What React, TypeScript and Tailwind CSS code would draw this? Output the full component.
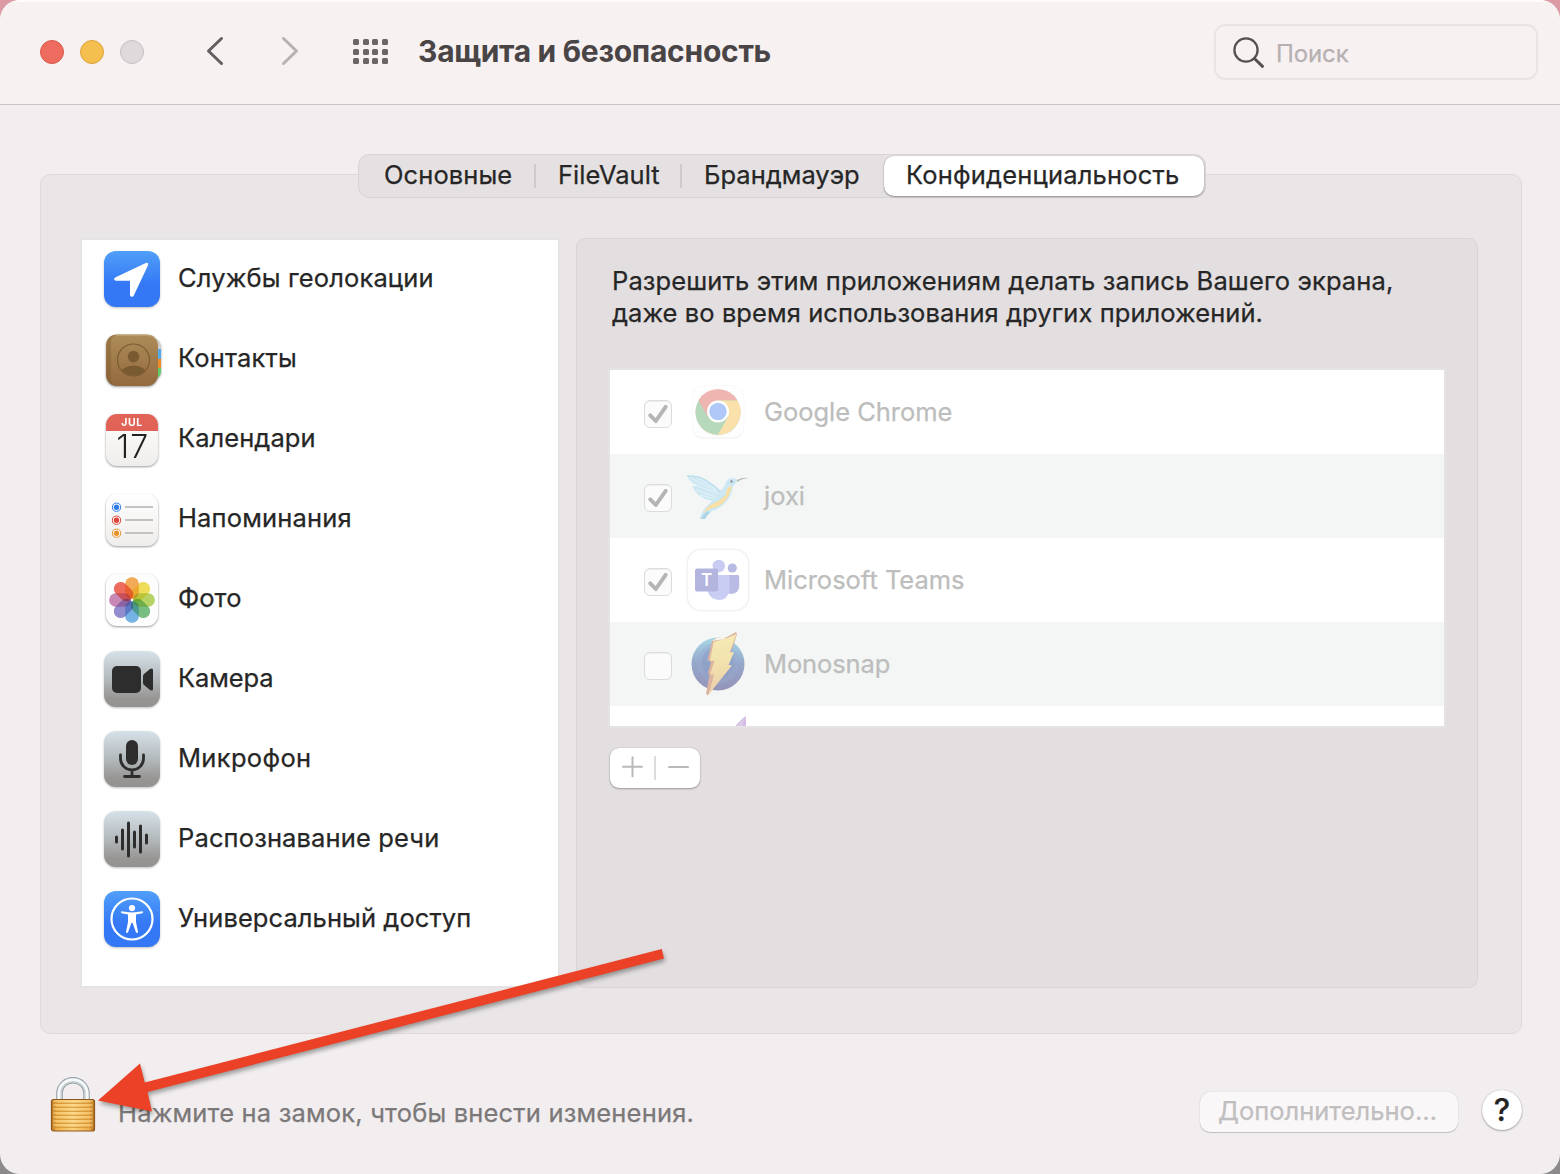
import React from "react";

const Label = ({ className = "", children }: { className?: string; children: React.ReactNode }) => (
  <span className={"whitespace-nowrap " + className}>{children}</span>
);

const Tile = ({ fill, children }: { fill: string; children: React.ReactNode }) => (
  <svg viewBox="0 0 56 56" className="size-14 shrink-0 overflow-visible drop-shadow-[0_1px_1px_rgba(0,0,0,0.25)]">
    <defs>
      <linearGradient id="tileBlue" x1="0" y1="0" x2="0" y2="1">
        <stop offset="0" stopColor="#509ff8" />
        <stop offset="0.6" stopColor="#3478f6" />
        <stop offset="1" stopColor="#3478f6" />
      </linearGradient>
      <linearGradient id="tileGray" x1="0" y1="0" x2="0" y2="1">
        <stop offset="0" stopColor="#d6e1e8" />
        <stop offset="0.5" stopColor="#b3b9bb" />
        <stop offset="0.85" stopColor="#979594" />
        <stop offset="1" stopColor="#949291" />
      </linearGradient>
    </defs>
    <rect width="56" height="56" rx="12" fill={fill} />
    {children}
  </svg>
);

const PaperTile = ({ children }: { children: React.ReactNode }) => (
  <svg viewBox="0 0 56 56" className="size-14 shrink-0 overflow-visible drop-shadow-[0_1px_1px_rgba(0,0,0,0.4)]">
    <defs>
      <linearGradient id="paper" x1="0" y1="0" x2="0" y2="1">
        <stop offset="0" stopColor="#ffffff" />
        <stop offset="1" stopColor="#efedeb" />
      </linearGradient>
      <linearGradient id="leather" x1="0" y1="0" x2="0" y2="1">
        <stop offset="0" stopColor="#ad8c57" />
        <stop offset="1" stopColor="#94693f" />
      </linearGradient>
    </defs>
    {children}
  </svg>
);

const LocationIcon = () => (
  <Tile fill="url(#tileBlue)">
    <path
      d="M11.6 26.2 L41.3 12.2 Q45.2 10.8 43.8 14.8 L29.8 44.6 Q28.4 46.9 26.3 45 L26 44.2 V29.8 H11.8 Q8.4 28.4 11.6 26.2Z"
      fill="#fff"
    />
  </Tile>
);

const ContactsIcon = () => (
  <PaperTile>
    <path d="M46 7 h5 q6 3 6 10 v1 h-11z" fill="#d0cfcc" />
    <path d="M50 18 h7 v10 h-7z" fill="#53aae6" />
    <path d="M50 28 h7 v9 h-7z" fill="#ef8b27" />
    <path d="M50 37 h7 v4 q-1 6 -7 7z" fill="#62ca66" />
    <rect x="2" y="3.5" width="52" height="51.5" rx="11" fill="url(#leather)" />
    <path d="M12 3.7 H13 q-5 1 -6 6 v39 q1 5 5 6 q-9.600 -1 -9.600 -10.500 v-30 q0 -9.800 9.600 -10.500z" fill="#79562c" opacity=".35" />
    <path d="M12 4.2 H43 q6 0 9 4" fill="none" stroke="#cbb58a" strokeWidth="1" opacity=".7" />
    <clipPath id="contactClip">
      <circle cx="29.500" cy="29" r="15.500" />
    </clipPath>
    <g fill="#795b32">
      <circle cx="29.500" cy="25.600" r="5.800" />
      <ellipse cx="29.500" cy="43.500" rx="13.500" ry="9" clipPath="url(#contactClip)" />
    </g>
    <circle cx="29.500" cy="29" r="16" fill="none" stroke="#795b32" strokeWidth="1.200" />
  </PaperTile>
);

const CalendarIcon = () => (
  <PaperTile>
    <rect x="2" y="3" width="52" height="52" rx="11" fill="url(#paper)" />
    <path d="M2 20 V14 a11 11 0 0 1 11 -11 H43 a11 11 0 0 1 11 11 V20z" fill="#e16256" />
    <text x="28" y="15" textAnchor="middle" fontSize="10.500" fontWeight="700" letterSpacing=".6" fill="#fff" className="font-['Inter',sans-serif] [-webkit-text-stroke:0px]">
      JUL
    </text>
    <text x="29" y="46.500" textAnchor="middle" fontSize="32" fontWeight="300" letterSpacing="1.2" fill="#222" className="font-['Inter',sans-serif] [-webkit-text-stroke:0px]">
      17
    </text>
  </PaperTile>
);

const RemindersIcon = () => (
  <PaperTile>
    <rect x="2" y="3" width="52" height="52" rx="11" fill="url(#paper)" />
    {[
      { y: 16.2, c: "#2f7de8" },
      { y: 29.2, c: "#dd4338" },
      { y: 42.2, c: "#e8932b" },
    ].map((r) => (
      <g key={r.y}>
        <circle cx="12.500" cy={r.y} r="4.100" fill="#fff" stroke={r.c} strokeWidth="1" />
        <circle cx="12.500" cy={r.y} r="2.700" fill={r.c} />
        <path d={`M21 ${r.y - 0.2} H49`} stroke="#bdbdbd" strokeWidth="1.800" />
      </g>
    ))}
  </PaperTile>
);

const petals = ["#f19a37", "#ecd63c", "#a9cc48", "#5fb36c", "#5aa5e0", "#7f78c4", "#bd72a8", "#e9503f"];
const PhotosIcon = () => (
  <PaperTile>
    <rect x="2" y="3" width="52" height="52" rx="11" fill="#fdfdfd" />
    {petals.map((c, i) => (
      <rect key={c} x="21.200" y="6.200" width="13.600" height="21.800" rx="6.800" fill={c} opacity="0.6" transform={`rotate(${i * 45} 28 29)`} />
    ))}
    <g className="isolate">
      {petals.map((c, i) => (
        <rect
          key={c}
          x="21.200"
          y="6.200"
          width="13.600"
          height="21.800"
          rx="6.800"
          fill={c}
          opacity="0.6"
          transform={`rotate(${i * 45} 28 29)`}
          className="mix-blend-multiply"
        />
      ))}
    </g>
    <circle cx="28" cy="29" r="1.200" fill="#fff" />
  </PaperTile>
);

const CameraIcon = () => (
  <Tile fill="url(#tileGray)">
    <rect x="8" y="15" width="29" height="27" rx="5" fill="#2d2d2d" />
    <path d="M39 25 Q39 24 40 23 L46 18 Q49 16.500 49 19 V38 Q49 40.500 46 39 L40 34 Q39 33 39 32Z" fill="#2d2d2d" />
  </Tile>
);

const MicIcon = () => (
  <Tile fill="url(#tileGray)">
    <rect x="22" y="9" width="12" height="25" rx="6" fill="#2d2d2d" />
    <path d="M16.500 24 V27.500 A11.500 11.500 0 0 0 39.500 27.500 V24 M28 39 V45 M20.500 45.500 H35.500" fill="none" stroke="#2d2d2d" strokeWidth="2.800" strokeLinecap="round" />
  </Tile>
);

const SpeechIcon = () => (
  <Tile fill="url(#tileGray)">
    <path
      d="M12.500 26 V31 M18.500 19 V38 M24.500 12 V45 M30.500 21 V36 M36.500 15 V41 M42.500 24 V32"
      fill="none"
      stroke="#2d2d2d"
      strokeWidth="3"
      strokeLinecap="round"
    />
  </Tile>
);

const AccessIcon = () => (
  <Tile fill="url(#tileBlue)">
    <circle cx="28" cy="28" r="20.500" fill="none" stroke="#fff" strokeWidth="2.200" />
    <circle cx="28" cy="17" r="3.100" fill="#fff" />
    <path
      d="M17.500 20.300 Q28 22.500 38.500 20.300 Q39.800 21.200 38.500 22.200 L32 23.600 V31 L34 41 Q33.600 42.700 32 41.600 L28.600 32 H27.400 L24 41.600 Q22.400 42.700 22 41 L24 31 V23.600 L17.500 22.200 Q16.200 21.200 17.500 20.300Z"
      fill="#fff"
    />
  </Tile>
);

const services = [
  { name: "Службы геолокации", Icon: LocationIcon, t: "tracking-[0.14px]" },
  { name: "Контакты", Icon: ContactsIcon, t: "tracking-[0.17px]" },
  { name: "Календари", Icon: CalendarIcon, t: "tracking-[0.05px]" },
  { name: "Напоминания", Icon: RemindersIcon, t: "tracking-[0.16px]" },
  { name: "Фото", Icon: PhotosIcon, t: "tracking-[0.1px]" },
  { name: "Камера", Icon: CameraIcon, t: "tracking-[-0.1px]" },
  { name: "Микрофон", Icon: MicIcon, t: "tracking-[0.33px]" },
  { name: "Распознавание речи", Icon: SpeechIcon, t: "tracking-[0.14px]" },
  { name: "Универсальный доступ", Icon: AccessIcon, t: "tracking-[0.08px]" },
];

const ChromeIcon = () => (
  <svg viewBox="0 0 64 64" className="size-16 shrink-0">
    <rect x="6" y="6.500" width="52" height="52" rx="11" fill="#ededed" />
    <rect x="6" y="5.500" width="52" height="52" rx="11" fill="#fefefe" stroke="#f7f7f7" strokeWidth="0.800" />
    <circle cx="32" cy="32.800" r="22.500" fill="#e3dccb" />
    <circle cx="32" cy="32" r="22.500" fill="#b6d8bb" />
    <path d="M12.500 20.500 A22.500 22.500 0 0 1 51.500 20.500 H32 L22.500 37.500Z" fill="#efb5b0" />
    <path d="M51.500 20.500 A22.500 22.500 0 0 1 32 54.500 L42 37 L32 20.500Z" fill="#fae1ab" />
    <circle cx="32" cy="31.500" r="11" fill="#fff" />
    <circle cx="32" cy="31.500" r="8.700" fill="#b0c8f7" />
  </svg>
);

const JoxiIcon = () => (
  <svg viewBox="0 0 64 64" className="size-16 shrink-0">
    <path d="M1 12 Q12 11 23 18 Q31 23 34 27 Q38 24 40 18 Q42 14 47 14 Q50 14 52 16.500 Q50 19 47 22 Q46 32 39 39 Q32 46 26 47 Q23 50 19 55 L14 55 Q15 48 21 42 Q25 38 26 37 Q11 34 6 22 Q9 22 11 22 Q4 18 1 12Z" fill="#cde8f3" />
    <path d="M3 13 L32 28 M8 20 L32 30 M10 26 L30 33 M14 31 L29 35 M11 13 L31 26" stroke="#e6f3f7" strokeWidth="0.900" fill="none" />
    <path d="M1 12 Q14 11 24 19 Q31 24 34 28" stroke="#b8deee" strokeWidth="1.400" fill="none" />
    <path d="M44 22 Q40 25 40 30 Q36 36 28 39 Q20 43 18 49 Q24 44 31 43 Q42 38 46 23Z" fill="#f8dfa5" />
    <path d="M15 55 Q17 50 21 47 L24 48 Q21 51 19 55Z" fill="#acd4e8" />
    <path d="M51 16 Q57 13 63 14 Q56 14.500 51 18Z" fill="#b3bab8" />
    <circle cx="45.500" cy="17.500" r="1.300" fill="#8e9899" />
  </svg>
);

const TeamsIcon = () => (
  <svg viewBox="0 0 64 64" className="size-16 shrink-0">
    <rect x="1.300" y="1.300" width="61.400" height="61.400" rx="14" fill="#fff" stroke="#f2f2f2" strokeWidth="1.600" />
    <circle cx="32.800" cy="18" r="6.200" fill="#c9cbf2" />
    <circle cx="46.300" cy="20" r="4.600" fill="#b7bae2" />
    <path d="M41 27 H52 Q53.200 27 53.200 28.500 V39 Q52 46 45 46 Q42 46 41 44Z" fill="#b9bbe4" />
    <path d="M27 27 H42 Q43.500 27 43.500 28.500 V42 Q42 52 32.500 52 Q23 51 21.500 42Z" fill="#cacdf3" />
    <rect x="9" y="20.500" width="23" height="23" rx="2" fill="#b3b5de" />
    <text x="20.500" y="38" textAnchor="middle" fontSize="17" fontWeight="600" fill="#fff" className="font-['Inter',sans-serif]">
      T
    </text>
  </svg>
);

const MonosnapIcon = () => (
  <svg viewBox="0 0 64 64" className="size-16 shrink-0">
    <defs>
      <linearGradient id="mono" x1="0" y1="0" x2="0" y2="1">
        <stop offset="0" stopColor="#a8d8e8" />
        <stop offset="0.5" stopColor="#94a6c9" />
        <stop offset="1" stopColor="#9493b8" />
      </linearGradient>
      <linearGradient id="bolt" x1="0" y1="0" x2="0" y2="1">
        <stop offset="0" stopColor="#f5eab5" />
        <stop offset="0.45" stopColor="#f2e2ae" />
        <stop offset="1" stopColor="#ebcda7" />
      </linearGradient>
    </defs>
    <circle cx="32" cy="32" r="26.500" fill="url(#mono)" />
    <circle cx="32" cy="31" r="21" fill="#98abd0" opacity=".4" />
    <circle cx="32" cy="30" r="16" fill="#8a9bc4" opacity=".5" />
    <path d="M26 9 L30 6 L41 5 L50 0 L51 2 L48 12 L40 30 L29 46 L22 63.500 L20 62 L23.500 43 L22 41 L25 30 L21.500 28Z" fill="#dcb3a1" />
    <path d="M27.500 10 L41 6 L50.500 2 L43.500 20.500 L48 20 L42.500 33 L46 33.500 L35 47 L22.500 63 L28 42.500 L24 42.500 L28.500 28.500 L24 29Z" fill="url(#bolt)" />
    <path d="M26 9 L31 6 L41 4 L38 7Z" fill="#f8f6ef" />
  </svg>
);

const PurpleIcon = () => (
  <svg viewBox="0 0 64 64" className="size-16 shrink-0">
    <path d="M46 20 Q49 14 59.500 5 Q61 14 58 22Z" fill="#d3b9e6" />
    <path d="M44 20 Q50 17 59 6 L55 20Z" fill="#dbcbe9" />
  </svg>
);

const apps = [
  { name: "Google Chrome", Icon: ChromeIcon, checked: true, bg: "bg-white", t: "tracking-[-0.04px]" },
  { name: "joxi", Icon: JoxiIcon, checked: true, bg: "bg-[#f4f6f5]", t: "tracking-[0px]" },
  { name: "Microsoft Teams", Icon: TeamsIcon, checked: true, bg: "bg-white", t: "tracking-[-0.02px]" },
  { name: "Monosnap", Icon: MonosnapIcon, checked: false, bg: "bg-[#f4f6f5]", t: "tracking-[-0.12px]" },
];

const Checkbox = ({ checked }: { checked: boolean }) => (
  <span className="mt-1 flex size-7 shrink-0 rounded-md border border-[#dcdcdc] bg-[#fbfbfb] shadow-[inset_0_1px_1px_rgba(0,0,0,0.06)]">
    {checked && (
      <svg viewBox="0 0 28 28" className="-m-px size-7 shrink-0">
        <path d="M6.200 15.300 L11.800 21 L21.700 6.800" fill="none" stroke="#b4b4b4" strokeWidth="3.900" strokeLinecap="round" strokeLinejoin="round" />
      </svg>
    )}
  </span>
);

const Lock = () => (
  <svg viewBox="0 0 46 56" className="h-14 w-[46px] shrink-0">
    <defs>
      <linearGradient id="brass" x1="0" y1="0" x2="1" y2="0">
        <stop offset="0" stopColor="#b9761f" />
        <stop offset="0.12" stopColor="#eeb049" />
        <stop offset="0.5" stopColor="#fbd27c" />
        <stop offset="0.88" stopColor="#eeae48" />
        <stop offset="1" stopColor="#aa661a" />
      </linearGradient>
    </defs>
    <path d="M9.500 25 V17 A13.500 12.800 0 0 1 36.500 17 V25" fill="none" stroke="#8d979b" strokeWidth="6.400" />
    <path d="M9.500 25 V17 A13.500 12.800 0 0 1 36.500 17 V25" fill="none" stroke="#c7d0d4" strokeWidth="5" />
    <path d="M9 25 V17 A14 13.300 0 0 1 37 17 V25" fill="none" stroke="#f7fafb" strokeWidth="2.600" />
    <rect x="1.500" y="23.500" width="43" height="31.500" rx="2" fill="url(#brass)" stroke="#8f561c" strokeWidth="1.200" />
    <path d="M2 27.300 H44 M2 31.300 H44 M2 35.300 H44 M2 39.300 H44 M2 43.300 H44 M2 47.300 H44 M2 51.300 H44" stroke="#c98a35" strokeWidth="1.200" opacity=".65" />
    <path d="M3 25 H43 M3 29 H43 M3 33 H43 M3 37 H43 M3 41 H43 M3 45 H43 M3 49 H43" stroke="#ffe3a0" strokeWidth="1.200" opacity=".75" />
  </svg>
);

const TitleBar = () => (
  <header className="flex h-[105px] items-start border-b border-[#c9c4c5] bg-[#f7f1f1] shadow-[inset_0_2px_0_#fdfbfb]">
    <div className="mt-10 ml-10 flex gap-4">
      <span className="size-6 rounded-full border border-[#d9574c] bg-[#ed6b5f]" />
      <span className="size-6 rounded-full border border-[#d8a33c] bg-[#f5bf4f]" />
      <span className="size-6 rounded-full border border-[#c4bfc0] bg-[#dedadb]" />
    </div>
    <svg viewBox="0 0 100 32" className="mt-[35px] ml-[59px] h-8 w-[100px]" fill="none" strokeWidth="3" strokeLinecap="round" strokeLinejoin="round">
      <path d="M18.500 3.500 L5.500 16 L18.500 28.500" stroke="#635e5f" />
      <path d="M80.500 3.500 L93.500 16 L80.500 28.500" stroke="#b6b1b2" />
    </svg>
    <div className="mt-[39px] ml-[50px] grid grid-cols-4 gap-x-[3.7px] gap-y-[3.6px]">
      {Array.from({ length: 12 }, (_, i) => (
        <span key={i} className="size-[6px] rounded-[1.5px] bg-[#6b6566]" />
      ))}
    </div>
    <Label className="mt-[30px] ml-[30px] text-[30px] leading-[42px] font-bold tracking-[-0.28px] text-[#494546] [-webkit-text-stroke:0px]">
      Защита и безопасность
    </Label>
    <div className="mt-6 mr-[22px] ml-auto flex h-14 w-[324px] items-center rounded-[11px] border-2 border-[#eae4e5] pl-4">
      <svg viewBox="0 0 34 34" className="size-[34px]" fill="none" stroke="#555152">
        <circle cx="14" cy="15" r="11.600" strokeWidth="2.300" />
        <path d="M22.400 23.500 L30.500 31.300" strokeWidth="3" strokeLinecap="round" />
      </svg>
      <Label className="mt-[4px] ml-[10px] text-[24px] leading-8 tracking-[-0.1px] text-[#b5b0b1]">Поиск</Label>
    </div>
  </header>
);

const Tabs = () => (
  <nav className="relative z-10 -mb-6 ml-[358px] flex h-11 w-[848px] items-center rounded-[11px] border border-[#d9d5d6] bg-[#e5e1e2] text-[25.5px] leading-8 text-[#262626]">
    <div className="flex w-[175px] pl-[25px]">
      <Label className="-mt-[2px] tracking-[0.08px]">Основные</Label>
    </div>
    <span className="h-6 w-[2px] shrink-0 bg-[#cfcbcc]" />
    <div className="flex w-[144px] pl-[22px]">
      <Label className="-mt-[2px]">FileVault</Label>
    </div>
    <span className="h-6 w-[2px] shrink-0 bg-[#cfcbcc]" />
    <div className="flex w-[202px] pl-[22px]">
      <Label className="-mt-[2px]">Брандмауэр</Label>
    </div>
    <div className="flex h-10 w-[320px] shrink-0 items-center rounded-[10px] bg-white pl-[22px] shadow-[0_1px_2px_rgba(0,0,0,0.35),0_0_1px_rgba(0,0,0,0.3)]">
      <Label className="-mt-[3px] tracking-[0.18px]">Конфиденциальность</Label>
    </div>
  </nav>
);

const ServiceList = () => (
  <ul className="mt-[2px] flex h-[746px] w-[476px] flex-col gap-6 bg-white pt-[11px] pl-[22px] shadow-[0_0_0_2px_#e5e3e4]">
    {services.map(({ name, Icon, t }) => (
      <li key={name} className="flex h-14 items-center gap-[18px]">
        <Icon />
        <Label className={"-mt-[2px] text-[25.5px] leading-8 text-[#262626] " + t}>{name}</Label>
      </li>
    ))}
  </ul>
);

const AppTable = () => (
  <div className="mt-[41px] h-[356px] w-[834px] overflow-hidden bg-white shadow-[0_0_0_2px_#e4e2e3]">
    {apps.map(({ name, Icon, checked, bg, t }) => (
      <div key={name} className={"flex h-[84px] items-center pl-[34px] " + bg}>
        <Checkbox checked={checked} />
        <span className="ml-[14px]">
          <Icon />
        </span>
        <Label className={"ml-[14px] text-[25.5px] leading-8 text-[#bcbdbc] " + t}>{name}</Label>
      </div>
    ))}
    <div className="flex h-[84px] items-start pt-[5px] pl-[76px]">
      <PurpleIcon />
    </div>
  </div>
);

const Arrow = () => (
  <svg viewBox="0 0 600 180" className="pointer-events-none absolute top-[940px] left-[80px] z-20 h-[180px] w-[600px] overflow-visible drop-shadow-[1px_3px_2px_rgba(0,0,0,0.35)]">
    <path d="M18 160.500 L60 123.500 L64.800 142.500 L581.800 9 L584 18.500 L67.500 152 L72 171.500Z" fill="#eb4126" />
  </svg>
);

export default function App() {
  return (
    <div className="relative h-[1174px] w-[1560px] overflow-hidden bg-linear-to-b from-[#dc9aa5] from-50% to-[#8c8a8b] to-50% font-['Inter','Liberation_Sans',sans-serif] [-webkit-text-stroke:0.25px]">
      <div className="flex h-full flex-col overflow-hidden rounded-[20px] bg-[#f2eeef]">
        <TitleBar />
        <main className="pt-[49px]">
          <Tabs />
          <section className="ml-10 flex h-[860px] w-[1482px] gap-[18px] rounded-[10px] border border-[#dedadb] bg-[#eae6e7] pt-[63px] pl-[41px]">
            <ServiceList />
            <div className="h-[750px] w-[902px] rounded-[9px] border border-[#d9d5d6] bg-[#e3dfe0] pl-[33px]">
              <p className="pt-[26px] pl-[2px] text-[25.5px] leading-8 text-[#262626]">
                <Label className="block tracking-[0.12px]">Разрешить этим приложениям делать запись Вашего экрана,</Label>
                <Label className="block tracking-[0.07px]">даже во время использования других приложений.</Label>
              </p>
              <AppTable />
              <div className="mt-[22px] flex h-10 w-[90px] items-center justify-center rounded-[9px] bg-white shadow-[0_1px_2px_rgba(0,0,0,0.3),0_0_1px_rgba(0,0,0,0.3)]">
                <svg viewBox="0 0 90 40" className="h-10 w-[90px]" fill="none" stroke="#b9b9b9" strokeWidth="2" strokeLinecap="round">
                  <path d="M13 18.700 H32 M22.500 9.200 V28.200 M59 19 H78" />
                  <path d="M45 8 V32" stroke="#dcdcdc" strokeLinecap="butt" />
                </svg>
              </div>
            </div>
          </section>
        </main>
        <footer className="flex items-start pl-[50px]">
          <span className="mt-[42px]">
            <Lock />
          </span>
          <Label className="mt-[63px] ml-[22px] text-[25.5px] leading-8 tracking-[0.18px] text-[#7b7879]">Нажмите на замок, чтобы внести изменения.</Label>
          <button className="mt-[58px] mr-[24px] ml-auto flex h-10 w-[258px] items-center rounded-[10px] bg-[#f9f7f8] pl-[18px] shadow-[0_1px_1px_rgba(0,0,0,0.18),0_0_1px_rgba(0,0,0,0.2)]">
            <Label className="-mt-[3px] text-[25.5px] leading-8 text-[#c0bebf]">Дополнительно…</Label>
          </button>
          <button className="mt-14 mr-[38px] grid size-10 shrink-0 place-items-center rounded-full bg-white text-[31px] leading-10 font-medium text-[#222] shadow-[0_1px_2px_rgba(0,0,0,0.3),0_0_1px_rgba(0,0,0,0.3)]">
            ?
          </button>
        </footer>
      </div>
      <Arrow />
    </div>
  );
}
